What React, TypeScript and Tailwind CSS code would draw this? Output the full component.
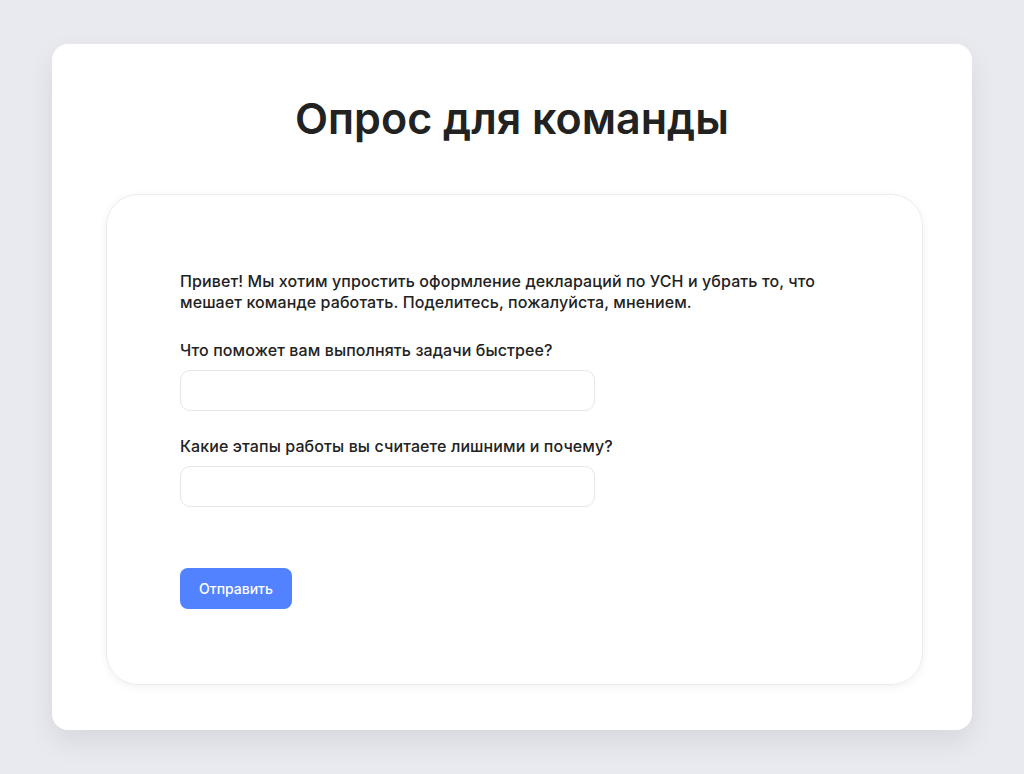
export default function App() {
  return (
    <div className="min-h-screen bg-[#e9eaf0] pt-[44px] font-['Inter','Noto_Sans',sans-serif] text-[#222]">
      <div className="mx-auto w-[920px] rounded-[16px] bg-white pl-[54px] pt-[44px] pb-[45px] shadow-[0_12px_28px_rgba(0,0,0,0.08)]">
        <h1 className="pr-[54px] text-center text-[43px] font-semibold leading-[60px]">Опрос для команды</h1>

        <div className="mt-[46px] w-[817px] rounded-[32px] border border-[#ececef] px-[73px] pt-[76px] pb-[75px] shadow-[0_2px_8px_rgba(0,0,0,0.06)]">
          <p className="max-w-[650px] text-[16px] font-medium leading-[21px] tracking-[0.1px]">
            Привет! Мы хотим упростить оформление деклараций по УСН и убрать то, что мешает команде работать. Поделитесь, пожалуйста, мнением.
          </p>

          <form className="flex flex-col" onSubmit={(e) => e.preventDefault()}>
            <label className="mt-[26px] text-[16px] font-medium leading-[22px] tracking-[0.1px]">Что поможет вам выполнять задачи быстрее?</label>
            <input className="mt-[9px] h-[41px] w-[415px] rounded-[10px] border border-[#e6e6e9] px-3 text-[15px] outline-none" />

            <label className="mt-[24px] text-[16px] font-medium leading-[22px] tracking-[0.1px]">Какие этапы работы вы считаете лишними и почему?</label>
            <input className="mt-[9px] h-[41px] w-[415px] rounded-[10px] border border-[#e6e6e9] px-3 text-[15px] outline-none" />

            <button type="submit" className="mt-[61px] h-[41px] w-[112px] rounded-[8px] bg-[#5282ff] text-[14px] font-medium text-white">
              Отправить
            </button>
          </form>
        </div>
      </div>
    </div>
  );
}
